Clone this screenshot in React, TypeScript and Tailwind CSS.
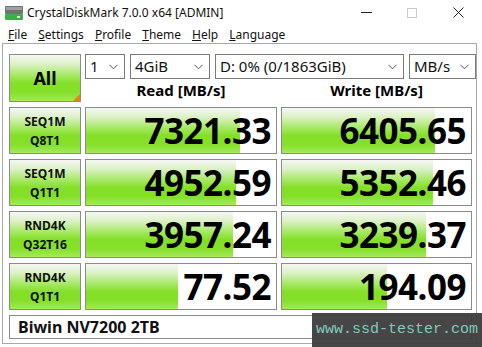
import { ReactNode } from 'react'

type Row = {
  a: string
  b: string
  read: string
  readFill: number
  write: string
  writeFill: number
}

const ROWS: Row[] = [
  { a: 'SEQ1M', b: 'Q8T1', read: '7321.33', readFill: 154, write: '6405.65', writeFill: 153 },
  { a: 'SEQ1M', b: 'Q1T1', read: '4952.59', readFill: 150, write: '5352.46', writeFill: 151 },
  { a: 'RND4K', b: 'Q32T16', read: '3957.24', readFill: 147, write: '3239.37', writeFill: 144 },
  { a: 'RND4K', b: 'Q1T1', read: '77.52', readFill: 92, write: '194.09', writeFill: 105 },
]

const GREEN =
  'bg-[linear-gradient(to_bottom,#f6f7f4_0%,#dcf1c6_20%,#a2e85e_46%,#84df26_62%,#86e02a_82%,#a4ea5c_100%)]'

function Chevron() {
  return (
    <svg width="9" height="6" viewBox="0 0 9 6" className="shrink-0">
      <path d="M0.5 0.8 L4.5 4.8 L8.5 0.8" fill="none" stroke="#555" strokeWidth="1" />
    </svg>
  )
}

function Select({ w, children }: { w: string; children: ReactNode }) {
  return (
    <div className={`${w} h-[25px] flex items-center justify-between border border-[#7a7a7a] bg-white pl-[4px] pr-[6px] text-[15px] text-[#111]`}>
      <span className="leading-none">{children}</span>
      <Chevron />
    </div>
  )
}

function Score({ value, fill, w }: { value: string; fill: number; w: string }) {
  return (
    <div className={`${w} h-[47px] relative border border-[#8c8c8c] bg-white flex items-center justify-end pr-[5px]`}>
      <div className={`absolute left-0 top-0 bottom-0 ${GREEN}`} style={{ width: fill }} />
      <span className="relative text-[35px] font-bold leading-none tracking-[-0.5px] text-black">{value}</span>
    </div>
  )
}

export default function App() {
  return (
    <div className="w-[482px] h-[347px] bg-white relative overflow-hidden font-['Noto_Sans','Open_Sans',sans-serif] text-black">
      {/* title bar */}
      <div className="h-[25px] flex items-center">
        <svg width="20" height="16" viewBox="0 0 20 16" className="ml-[4px] mt-[1px]">
          <rect x="1" y="1" width="18" height="8" rx="1" fill="#6e7570" />
          <rect x="2" y="2" width="16" height="3" fill="#9aa39c" />
          <rect x="1" y="9" width="18" height="6" rx="1" fill="#3cb043" />
          <rect x="13" y="11" width="3" height="2" fill="#d8f5d0" />
        </svg>
        <span className="ml-[3px] text-[12px] text-[#111]">CrystalDiskMark 7.0.0 x64 [ADMIN]</span>
        <div className="ml-auto flex items-center">
          <div className="w-[46px] flex justify-center">
            <div className="w-[11px] h-px bg-[#222]" />
          </div>
          <div className="w-[46px] flex justify-center">
            <div className="w-[10px] h-[10px] border border-[#c8c8c8]" />
          </div>
          <div className="w-[46px] flex justify-center mr-[1px]">
            <svg width="11" height="11" viewBox="0 0 11 11">
              <path d="M0.5 0.5 L10.5 10.5 M10.5 0.5 L0.5 10.5" stroke="#222" strokeWidth="1" />
            </svg>
          </div>
        </div>
      </div>

      {/* menu bar */}
      <div className="h-[18px] flex items-center gap-[11px] pl-[8px] pt-[2px] text-[12px] text-[#111]">
        <span><u>F</u>ile</span>
        <span><u>S</u>ettings</span>
        <span><u>P</u>rofile</span>
        <span><u>T</u>heme</span>
        <span><u>H</u>elp</span>
        <span><u>L</u>anguage</span>
      </div>

      {/* main frame */}
      <div className="ml-[2px] w-[475px] h-[301px] border border-[#a8a8a8] bg-white pt-[10px] pl-[6px]">
        <div className="flex gap-[4px]">
          <div className={`w-[72px] h-[48px] relative border border-[#8c8c8c] ${GREEN} flex items-center justify-center`}>
            <span className="text-[18px] font-bold">All</span>
            <div className="absolute right-0 bottom-0 w-0 h-0 border-l-[7px] border-l-transparent border-b-[7px] border-b-[#e8801c]" />
          </div>
          <div className="flex flex-col">
            <div className="flex gap-[5px]">
              <Select w="w-[40px]">1</Select>
              <Select w="w-[80px]">4GiB</Select>
              <Select w="w-[189px]">D: 0% (0/1863GiB)</Select>
              <Select w="w-[67px]">MB/s</Select>
            </div>
            <div className="flex gap-[4px] h-[23px] items-center text-[15px] font-bold">
              <div className="w-[192px] text-center">Read [MB/s]</div>
              <div className="w-[191px] text-center">Write [MB/s]</div>
            </div>
          </div>
        </div>

        <div className="mt-[5px] flex flex-col gap-[5px]">
          {ROWS.map((r, i) => (
            <div key={i} className="flex gap-[4px]">
              <div className={`w-[72px] h-[47px] border border-[#8c8c8c] ${GREEN} flex flex-col items-center justify-center text-[12px] font-bold leading-[19px] text-[#111]`}>
                <span>{r.a}</span>
                <span>{r.b}</span>
              </div>
              <Score w="w-[192px]" value={r.read} fill={r.readFill} />
              <Score w="w-[191px]" value={r.write} fill={r.writeFill} />
            </div>
          ))}
        </div>

        <div className="mt-[5px] w-[463px] h-[24px] border border-[#8c8c8c] bg-white flex items-center pl-[8px] text-[16px] font-bold text-[#111]">
          Biwin NV7200 2TB
        </div>
      </div>

      {/* watermark */}
      <div className="absolute left-[312px] top-[313px] w-[170px] h-[34px] bg-[#3c3c3c]/95 flex items-center justify-center">
        <span className="font-['Liberation_Mono','DejaVu_Sans_Mono',monospace] text-[15px] text-[#84c8bc]">
          www.ssd-tester.com
        </span>
      </div>
    </div>
  )
}
